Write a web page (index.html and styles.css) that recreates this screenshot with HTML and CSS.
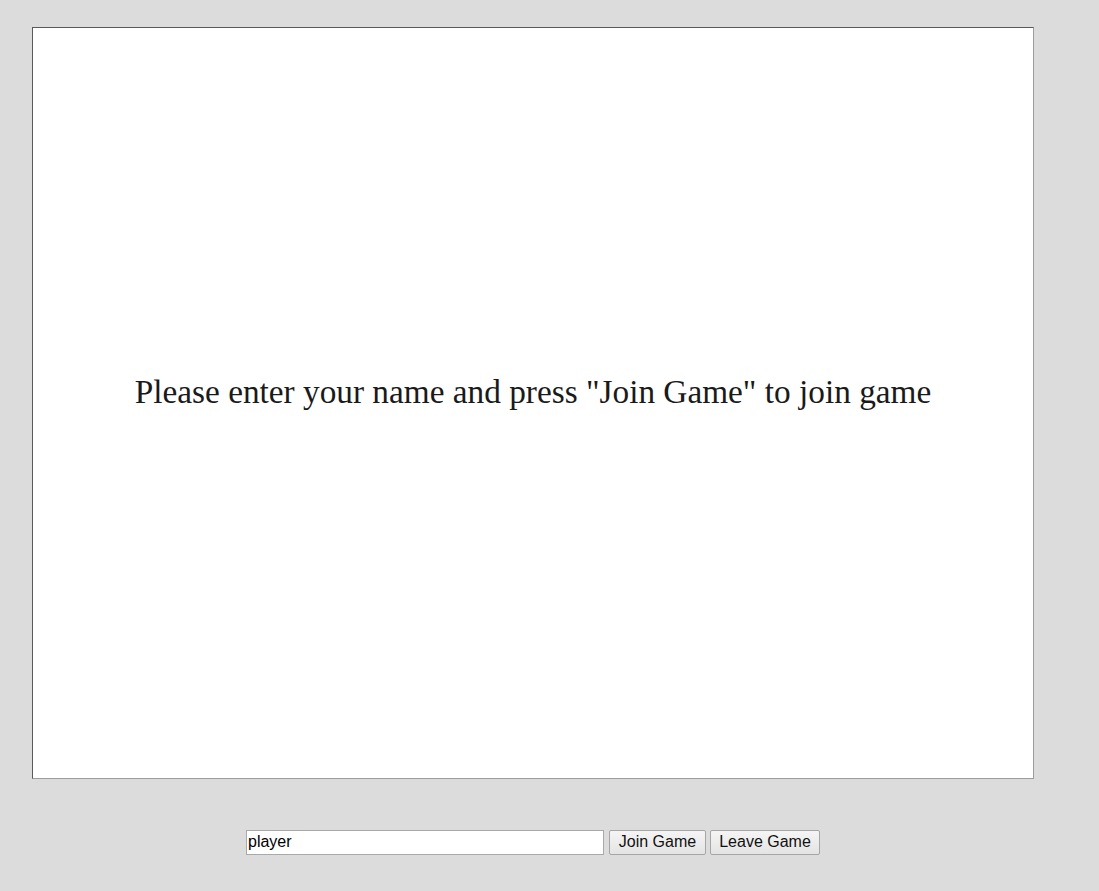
FILE: index.html
```html
<!DOCTYPE html>
<html>
<head>
<meta charset="utf-8">
<title>Game</title>
<link rel="stylesheet" href="styles.css">
</head>
<body>
<div class="page">
  <div class="stage">
    <p class="message">Please enter your name and press "Join Game" to join game</p>
  </div>
  <div class="controls">
    <input class="name-input" type="text" value="player">
    <button class="btn btn-join">Join Game</button>
    <button class="btn btn-leave">Leave Game</button>
  </div>
</div>
</body>
</html>
```

FILE: styles.css
```css
html, body {
  margin: 0;
  padding: 0;
  background: #dcdcdc;
}

.page {
  width: 1002px;
  padding: 27px 0 0 32px;
}

.stage {
  box-sizing: border-box;
  width: 1002px;
  height: 752px;
  background: #ffffff;
  border: 1px solid;
  border-color: #5a5a5a #9c9c9c #9c9c9c #5a5a5a;
  display: flex;
  flex-direction: column;
  align-items: center;
}

.message {
  margin: 348px 0 0 0;
  font-family: "Liberation Serif", "Times New Roman", serif;
  font-size: 33.3px;
  line-height: 32px;
  color: #1a1a1a;
  white-space: nowrap;
}

.controls {
  margin-top: 51px;
  display: flex;
  justify-content: center;
  align-items: stretch;
  height: 25px;
}

.name-input {
  box-sizing: border-box;
  width: 358px;
  height: 25px;
  margin: 0 5px 0 0;
  padding: 0 1px 2px 1px;
  border: 1px solid #a9a9a9;
  background: #ffffff;
  font-family: "Liberation Sans", Arial, sans-serif;
  font-size: 16px;
  color: #000;
  outline: none;
}

.btn {
  box-sizing: border-box;
  height: 25px;
  margin: 0;
  padding: 0 0 2px 0;
  border: 1px solid #a6a6a6;
  border-radius: 2px;
  background: linear-gradient(#f5f5f5, #e4e4e4);
  font-family: "Liberation Sans", Arial, sans-serif;
  font-size: 16px;
  color: #111;
  line-height: 19px;
  text-align: center;
}

.btn-join {
  width: 97px;
  margin-right: 4px;
}

.btn-leave {
  width: 110px;
}
```
